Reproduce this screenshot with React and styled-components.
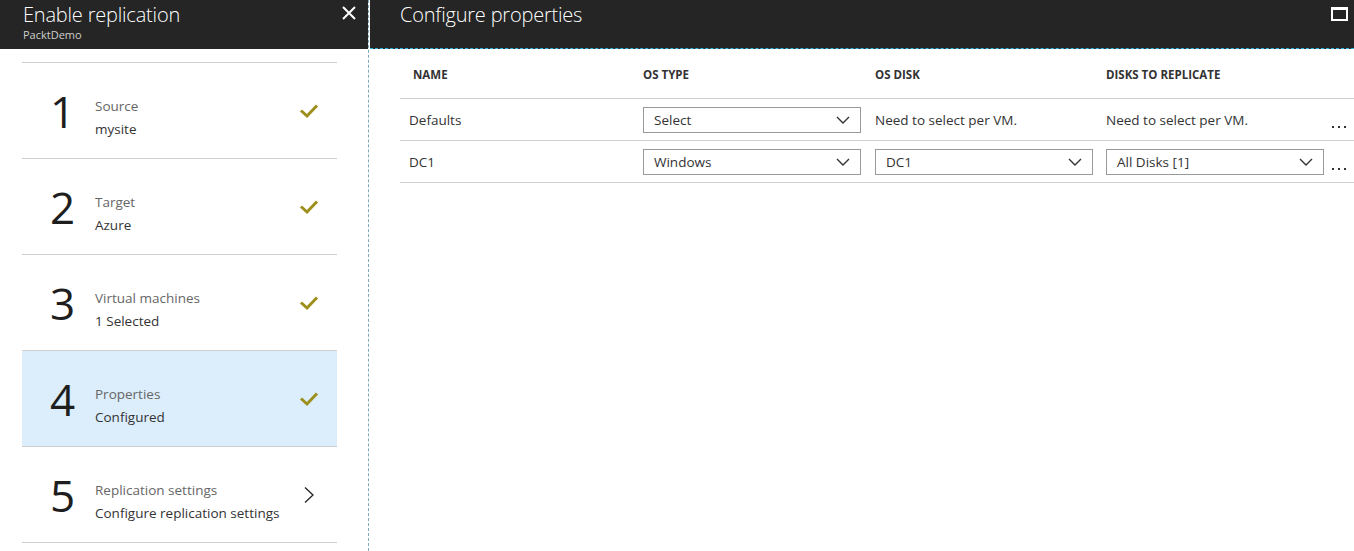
import styled, { createGlobalStyle } from "styled-components";

const Global = createGlobalStyle`
  body {
    margin: 0;
    font-family: "Open Sans", "Noto Sans", sans-serif;
    background: #fff;
  }
`;

const steps = [
  { n: 1, title: "Source", sub: "mysite", done: true },
  { n: 2, title: "Target", sub: "Azure", done: true },
  { n: 3, title: "Virtual machines", sub: "1 Selected", done: true },
  { n: 4, title: "Properties", sub: "Configured", done: true, active: true },
  { n: 5, title: "Replication settings", sub: "Configure replication settings" },
];

function Check() {
  return (
    <svg width="20" height="16" viewBox="0 0 20 16">
      <path d="M2 7.5 L8 13 L18 2.5" fill="none" stroke="#9c8f1c" strokeWidth="3" />
    </svg>
  );
}

function Chevron() {
  return (
    <svg width="12" height="18" viewBox="0 0 12 18">
      <path d="M2 1.5 L10 9 L2 16.5" fill="none" stroke="#222" strokeWidth="1.3" />
    </svg>
  );
}

function Caret() {
  return (
    <svg width="14" height="8" viewBox="0 0 14 8">
      <path d="M1 1 L7 7 L13 1" fill="none" stroke="#333" strokeWidth="1.4" />
    </svg>
  );
}

function Dots() {
  return (
    <DotsBox>
      <span />
      <span />
      <span />
    </DotsBox>
  );
}

export default function App() {
  return (
    <>
      <Global />
      <Page>
        <Blade>
          <Header>
            <HeadText>
              <h1>Enable replication</h1>
              <small>PacktDemo</small>
            </HeadText>
            <CloseBtn>
              <svg width="14" height="14" viewBox="0 0 14 14">
                <path d="M1 1 L13 13 M13 1 L1 13" stroke="#fff" strokeWidth="2" />
              </svg>
            </CloseBtn>
          </Header>
          <StepList>
            {steps.map((s) => (
              <Step key={s.n} $active={s.active}>
                <Num>{s.n}</Num>
                <StepText>
                  <span>{s.title}</span>
                  <b>{s.sub}</b>
                </StepText>
                <StepIcon>{s.done ? <Check /> : <Chevron />}</StepIcon>
              </Step>
            ))}
          </StepList>
        </Blade>
        <Main>
          <MainHeader>
            <h1>Configure properties</h1>
            <MaxIcon />
          </MainHeader>
          <Table>
            <HeadRow>
              <Th $pad={13}>NAME</Th>
              <Th>OS TYPE</Th>
              <Th>OS DISK</Th>
              <Th>DISKS TO REPLICATE</Th>
              <Th />
            </HeadRow>
            <Row>
              <Td $pad={9}>Defaults</Td>
              <Td>
                <Select>
                  <span>Select</span>
                  <Caret />
                </Select>
              </Td>
              <Td>Need to select per VM.</Td>
              <Td>Need to select per VM.</Td>
              <Td>
                <Dots />
              </Td>
            </Row>
            <Row>
              <Td $pad={9}>DC1</Td>
              <Td>
                <Select>
                  <span>Windows</span>
                  <Caret />
                </Select>
              </Td>
              <Td>
                <Select>
                  <span>DC1</span>
                  <Caret />
                </Select>
              </Td>
              <Td>
                <Select>
                  <span>All Disks [1]</span>
                  <Caret />
                </Select>
              </Td>
              <Td>
                <Dots />
              </Td>
            </Row>
          </Table>
        </Main>
      </Page>
    </>
  );
}

const Page = styled.div`
  display: flex;
  height: 551px;
  overflow: hidden;
`;

const Blade = styled.div`
  width: 368px;
  flex-shrink: 0;
  border-right: 1px dashed #7fa8b8;
  display: flex;
  flex-direction: column;
`;

const Header = styled.div`
  height: 49px;
  background: #252525;
  display: flex;
  justify-content: space-between;
  align-items: flex-start;
  padding: 0 12px 0 23px;
`;

const HeadText = styled.div`
  display: flex;
  flex-direction: column;
  h1 {
    margin: 2px 0 0;
    font-size: 20px;
    font-weight: 300;
    color: #fff;
    line-height: 26px;
    letter-spacing: -0.2px;
  }
  small {
    font-size: 11px;
    color: #d0d0d0;
    line-height: 14px;
  }
`;

const CloseBtn = styled.div`
  margin-top: 6px;
  width: 14px;
  height: 14px;
  display: flex;
`;

const StepList = styled.div`
  padding: 13px 31px 0 22px;
`;

const Step = styled.div`
  height: 95px;
  border-top: 1px solid #cfcfcf;
  &:last-child {
    border-bottom: 1px solid #cfcfcf;
  }
  background: ${(p) => (p.$active ? "#dcedfc" : "transparent")};
  display: flex;
  align-items: center;
  padding-left: 28px;
`;

const Num = styled.div`
  width: 45px;
  font-size: 44px;
  line-height: 1;
  color: #1e1e1e;
`;

const StepText = styled.div`
  flex: 1;
  display: flex;
  flex-direction: column;
  padding-top: 14px;
  span {
    font-size: 13.5px;
    color: #666;
    line-height: 22px;
  }
  b {
    font-weight: 400;
    font-size: 13.5px;
    color: #333;
    line-height: 24px;
  }
`;

const StepIcon = styled.div`
  width: 20px;
  margin-right: 18px;
  display: flex;
  justify-content: center;
`;

const Main = styled.div`
  flex: 1;
  display: flex;
  flex-direction: column;
  margin-left: 1px;
`;

const MainHeader = styled.div`
  height: 48px;
  background: #252525;
  border-bottom: 1px dashed #2fb4e0;
  display: flex;
  justify-content: space-between;
  align-items: flex-start;
  padding: 0 6px 0 30px;
  h1 {
    margin: 2px 0 0;
    font-size: 20px;
    font-weight: 300;
    color: #fff;
    line-height: 26px;
    letter-spacing: -0.2px;
  }
`;

const MaxIcon = styled.div`
  margin-top: 7px;
  width: 13px;
  height: 9px;
  border: 2px solid #fff;
  border-top-width: 3px;
`;

const Table = styled.div`
  margin-left: 30px;
  display: flex;
  flex-direction: column;
`;

const cols = "243px 232px 231px 220px 1fr";

const HeadRow = styled.div`
  display: grid;
  grid-template-columns: ${cols};
  height: 48px;
  border-bottom: 1px solid #cfcfcf;
  align-items: center;
  padding-top: 1px;
`;

const Th = styled.div`
  font-size: 11.5px;
  font-weight: 700;
  color: #333;
  padding-left: ${(p) => p.$pad || 0}px;
`;

const Row = styled.div`
  display: grid;
  grid-template-columns: ${cols};
  height: 41px;
  border-bottom: 1px solid #cfcfcf;
  align-items: center;
`;

const Td = styled.div`
  font-size: 13.5px;
  color: #333;
  padding-left: ${(p) => p.$pad || 0}px;
`;

const Select = styled.div`
  width: 218px;
  height: 26px;
  box-sizing: border-box;
  border: 1px solid #999;
  display: flex;
  align-items: center;
  justify-content: space-between;
  padding: 0 10px;
  font-size: 13.5px;
  color: #333;
  background: #fff;
`;

const DotsBox = styled.div`
  display: flex;
  gap: 4px;
  padding-left: 6px;
  margin-top: 14px;
  span {
    width: 2px;
    height: 2px;
    background: #333;
  }
`;
